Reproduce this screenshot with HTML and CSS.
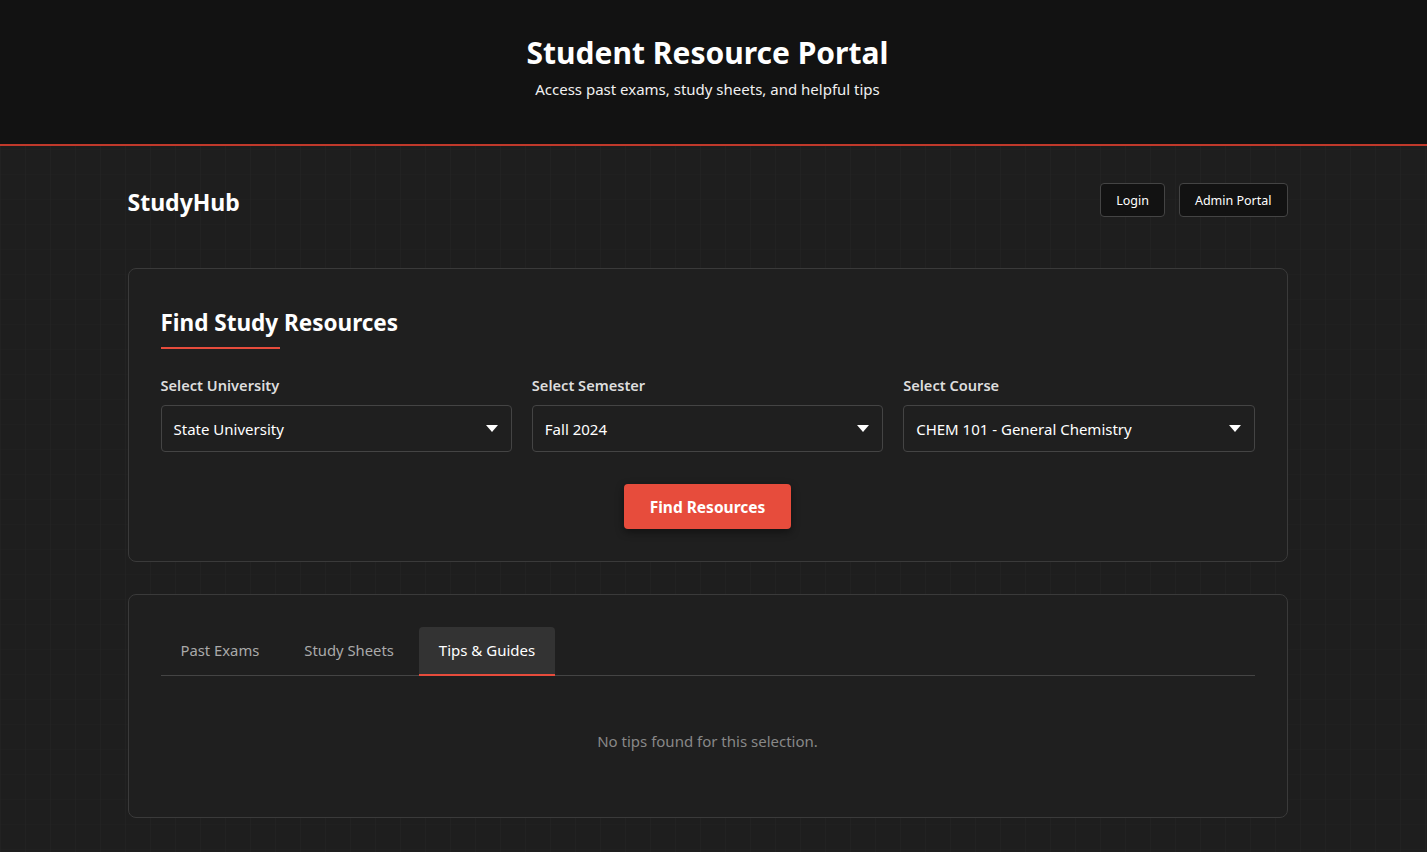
FILE: index.html
```html
<!DOCTYPE html>
<html lang="en">
<head>
<meta charset="utf-8">
<title>Student Resource Portal</title>
<link rel="stylesheet" href="styles.css">
</head>
<body>
<header class="hero">
  <div class="hero-inner">
    <h1 class="hero-title">Student Resource Portal</h1>
    <p class="hero-sub">Access past exams, study sheets, and helpful tips</p>
  </div>
</header>
<div class="page">
  <div class="container">
    <nav class="topbar">
      <div class="brand">StudyHub</div>
      <div class="nav-actions">
        <button class="btn-outline">Login</button>
        <button class="btn-outline">Admin Portal</button>
      </div>
    </nav>

    <section class="card search-card">
      <h2 class="section-title">Find Study Resources</h2>
      <div class="filters">
        <div class="field">
          <label class="field-label">Select University</label>
          <div class="select">
            <span>State University</span>
            <svg class="caret" width="12" height="7" viewBox="0 0 12 7"><path d="M0 0H12L6 7Z" fill="#fff"/></svg>
          </div>
        </div>
        <div class="field">
          <label class="field-label">Select Semester</label>
          <div class="select">
            <span>Fall 2024</span>
            <svg class="caret" width="12" height="7" viewBox="0 0 12 7"><path d="M0 0H12L6 7Z" fill="#fff"/></svg>
          </div>
        </div>
        <div class="field">
          <label class="field-label">Select Course</label>
          <div class="select">
            <span>CHEM 101 - General Chemistry</span>
            <svg class="caret" width="12" height="7" viewBox="0 0 12 7"><path d="M0 0H12L6 7Z" fill="#fff"/></svg>
          </div>
        </div>
      </div>
      <div class="actions">
        <button class="btn-primary">Find Resources</button>
      </div>
    </section>

    <section class="card results-card">
      <div class="tabs">
        <button class="tab">Past Exams</button>
        <button class="tab">Study Sheets</button>
        <button class="tab active">Tips &amp; Guides</button>
      </div>
      <div class="empty">No tips found for this selection.</div>
    </section>
  </div>
</div>
</body>
</html>
```
FILE: styles.css
```css
* { box-sizing: border-box; }
html, body {
  margin: 0;
  padding: 0;
}
body {
  font-family: "Noto Sans", "Open Sans", sans-serif;
  color: #fff;
  background-color: #1e1e1e;
  background-image:
    linear-gradient(90deg, rgba(255,255,255,0.016) 1px, transparent 1px),
    linear-gradient(0deg, rgba(255,255,255,0.006) 1px, transparent 1px);
  background-size: 25px 25px;
  min-height: 852px;
}
.hero {
  background: #121212;
  border-bottom: 2px solid #c0392b;
  height: 146px;
}
.hero-inner {
  padding: 33px 12px 0 0;
  text-align: center;
}
.hero-title {
  margin: 0;
  font-size: 30px;
  font-weight: 700;
  line-height: 40px;
}
.hero-sub {
  margin: 5px 0 0;
  font-size: 15px;
  line-height: 22px;
  color: #f0f0f0;
}
.page {
  padding-right: 12px;
}
.container {
  width: 1160px;
  margin: 0 auto;
}
.topbar {
  display: flex;
  justify-content: space-between;
  align-items: center;
  height: 112px;
  padding-top: 0;
}
.brand {
  font-size: 23px;
  font-weight: 700;
}
.nav-actions {
  display: flex;
  gap: 14px;
  margin-top: -4px;
}
.btn-outline {
  font-family: inherit;
  font-size: 12.5px;
  color: #fff;
  background: #121212;
  border: 1px solid #444;
  border-radius: 4px;
  height: 34px;
  padding: 0 15px;
}
.card {
  background: #1f1f1f;
  border: 1px solid #3a3a3a;
  border-radius: 8px;
  padding: 32px;
}
.search-card {
  margin-top: 10px;
  padding-top: 39px;
  height: 294px;
}
.section-title {
  margin: 0;
  display: inline-block;
  font-size: 22.5px;
  font-weight: 700;
  line-height: 29px;
  position: relative;
  padding-bottom: 12px;
}
.section-title::after {
  content: "";
  position: absolute;
  left: 0;
  bottom: 0;
  width: 119px;
  height: 2px;
  background: #e74c3c;
}
.filters {
  display: grid;
  grid-template-columns: 1fr 1fr 1fr;
  gap: 20px;
  margin-top: 26px;
}
.field-label {
  display: block;
  font-size: 14.6px;
  font-weight: 600;
  color: #ddd;
  line-height: 20px;
  margin-bottom: 10px;
}
.select {
  height: 47px;
  border: 1px solid #444;
  border-radius: 4px;
  background: #1f1f1f;
  display: flex;
  align-items: center;
  justify-content: space-between;
  padding: 0 13px 0 12px;
  font-size: 15px;
  color: #fff;
}
.caret { display: block; }
.actions {
  display: flex;
  justify-content: center;
  margin-top: 32px;
}
.btn-primary {
  font-family: inherit;
  font-size: 15.5px;
  font-weight: 700;
  color: #fff;
  background: #e74c3c;
  border: none;
  border-radius: 4px;
  width: 167px;
  height: 45px;
  box-shadow: 0 3px 8px rgba(0,0,0,0.45);
}
.results-card {
  margin-top: 32px;
  height: 224px;
}
.tabs {
  display: flex;
  gap: 5px;
  border-bottom: 1px solid #444;
}
.tab {
  font-family: inherit;
  font-size: 14.8px;
  color: #aaa;
  background: transparent;
  border: none;
  border-bottom: 2px solid transparent;
  border-radius: 4px 4px 0 0;
  padding: 0 20px 2px;
  height: 49px;
  margin-bottom: -1px;
}
.tab.active {
  background: #333;
  color: #fff;
  border-bottom-color: #e74c3c;
  font-size: 15px;
}
.empty {
  text-align: center;
  color: #888;
  font-size: 15px;
  padding-top: 55px;
}
```
